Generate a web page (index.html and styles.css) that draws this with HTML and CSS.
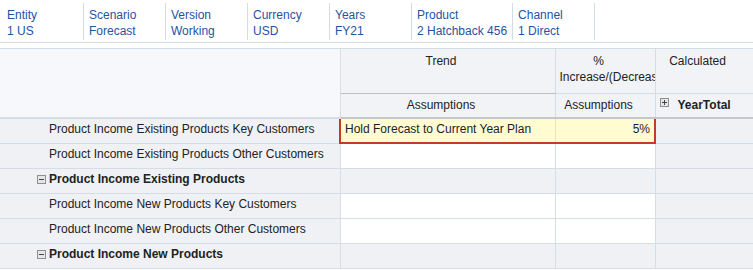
FILE: index.html
```html
<!DOCTYPE html>
<html lang="en">
<head>
    <meta charset="UTF-8">
    <title>Form</title>
    <link rel="stylesheet" href="styles.css">
</head>
<body>
    <div class="pov">
        <div class="pov-item"><span>Entity</span><span>1 US</span></div>
        <div class="pov-item"><span>Scenario</span><span>Forecast</span></div>
        <div class="pov-item"><span>Version</span><span>Working</span></div>
        <div class="pov-item"><span>Currency</span><span>USD</span></div>
        <div class="pov-item"><span>Years</span><span>FY21</span></div>
        <div class="pov-item"><span>Product</span><span>2 Hatchback 456</span></div>
        <div class="pov-item"><span>Channel</span><span>1 Direct</span></div>
    </div>

    <div class="grid-wrap">
        <table class="grid">
            <colgroup>
                <col style="width: 340px">
                <col style="width: 215px">
                <col style="width: 100px">
                <col style="width: 98px">
            </colgroup>
            <tr class="head-top">
                <th class="corner" rowspan="2"></th>
                <th class="col-head trend">Trend</th>
                <th class="col-head clip">%<br>Increase/(Decrease)</th>
                <th class="col-head">Calculated</th>
            </tr>
            <tr class="head-sub">
                <th class="col-head">Assumptions</th>
                <th class="col-head">Assumptions</th>
                <th class="col-head total"><span class="box plus"></span>YearTotal</th>
            </tr>
            <tr>
                <td class="row-head">Product Income Existing Products Key Customers</td>
                <td class="cell sel sel-left">Hold Forecast to Current Year Plan</td>
                <td class="cell sel sel-right num">5%</td>
                <td class="cell ro"></td>
            </tr>
            <tr>
                <td class="row-head">Product Income Existing Products Other Customers</td>
                <td class="cell"></td>
                <td class="cell"></td>
                <td class="cell ro"></td>
            </tr>
            <tr>
                <td class="row-head parent"><span class="box minus"></span>Product Income Existing Products</td>
                <td class="cell ro"></td>
                <td class="cell ro"></td>
                <td class="cell ro"></td>
            </tr>
            <tr>
                <td class="row-head">Product Income New Products Key Customers</td>
                <td class="cell"></td>
                <td class="cell"></td>
                <td class="cell ro"></td>
            </tr>
            <tr>
                <td class="row-head">Product Income New Products Other Customers</td>
                <td class="cell"></td>
                <td class="cell"></td>
                <td class="cell ro"></td>
            </tr>
            <tr>
                <td class="row-head parent"><span class="box minus"></span>Product Income New Products</td>
                <td class="cell ro"></td>
                <td class="cell ro"></td>
                <td class="cell ro"></td>
            </tr>
        </table>
    </div>
</body>
</html>
```

FILE: styles.css
```css
body {
    margin: 0;
    font-family: "Liberation Sans", Arial, sans-serif;
    font-size: 12px;
    color: #222;
    background: #fff;
    overflow: hidden;
}

.pov {
    display: flex;
    height: 42px;
    padding-left: 2px;
    border-bottom: 1px solid #d3dbe3;
    margin-bottom: 5px;
}

.pov-item {
    display: flex;
    flex-direction: column;
    box-sizing: border-box;
    min-width: 82px;
    height: 37px;
    margin-top: 3px;
    padding: 4px 5px 0 5px;
    line-height: 16px;
    color: #2553a3;
    border-right: 1px solid #d3dbe3;
}

.grid-wrap {
    width: 753px;
    overflow: hidden;
    border-top: 1px solid #d3dbe3;
}

.grid {
    table-layout: fixed;
    border-collapse: collapse;
    width: 753px;
}

.grid th,
.grid td {
    padding: 0;
    white-space: nowrap;
    overflow: hidden;
}

.grid tr {
    height: 25px;
}

.grid .head-top {
    height: 44px;
}

.grid .head-sub {
    height: 25px;
}

.corner {
    background: #f6f8fc;
    border-right: 1px solid #d6dfe8;
    border-bottom: 2px solid #d6dde5;
}

.col-head {
    background: #f2f3f7;
    font-weight: normal;
    line-height: 16px;
    text-align: center;
    padding: 0 17px 0 4px !important;
    border-right: 1px solid #d6dde5;
    border-bottom: 1px solid #d6dde5;
    color: #222;
}

.head-top .col-head {
    vertical-align: top;
    padding-top: 4px !important;
}

.head-top .trend {
    border-left: 1px solid #bdbdbd;
    border-bottom: 1px solid #bdbdbd;
}

.clip {
    text-overflow: clip;
}

.head-sub .col-head {
    vertical-align: middle;
    border-bottom: 2px solid #c4c8cc;
}

.head-sub .total {
    text-align: left;
    font-weight: bold;
}

.row-head {
    background: #eff1f5;
    padding: 0 0 4px 49px !important;
    border-bottom: 1px solid #d6dde5;
    border-right: 1px solid #d6dfe8;
    vertical-align: middle;
}

.row-head.parent {
    padding-left: 37px !important;
    font-weight: bold;
}

.box {
    display: inline-block;
    position: relative;
    box-sizing: border-box;
    width: 9px;
    height: 9px;
    margin-right: 3px;
    vertical-align: -1px;
    border: 1px solid #8f8f8f;
    background: #e6e6e6;
}

.box::before {
    content: "";
    position: absolute;
    left: 1px;
    top: 3px;
    width: 5px;
    height: 1px;
    background: #444;
}

.plus::after {
    content: "";
    position: absolute;
    left: 3px;
    top: 1px;
    width: 1px;
    height: 5px;
    background: #444;
}

.total .box {
    margin-right: 9px;
    vertical-align: 2px;
}

.cell {
    background: #fff;
    border-right: 1px solid #d6dde5;
    border-bottom: 1px solid #d6dde5;
    padding: 0 4px 4px 4px !important;
}

.cell.ro {
    background: #eff1f5;
}

.cell.sel {
    background: #fffcd2;
    border-top: 2px solid #c23b2b;
    border-bottom: 2px solid #c23b2b;
    color: #1b1b33;
}

.sel-left {
    border-left: 2px solid #c23b2b;
    border-right: 1px solid #e7e4c0 !important;
}

.sel-right {
    border-right: 2px solid #c23b2b !important;
}

.num {
    text-align: right;
}
```
